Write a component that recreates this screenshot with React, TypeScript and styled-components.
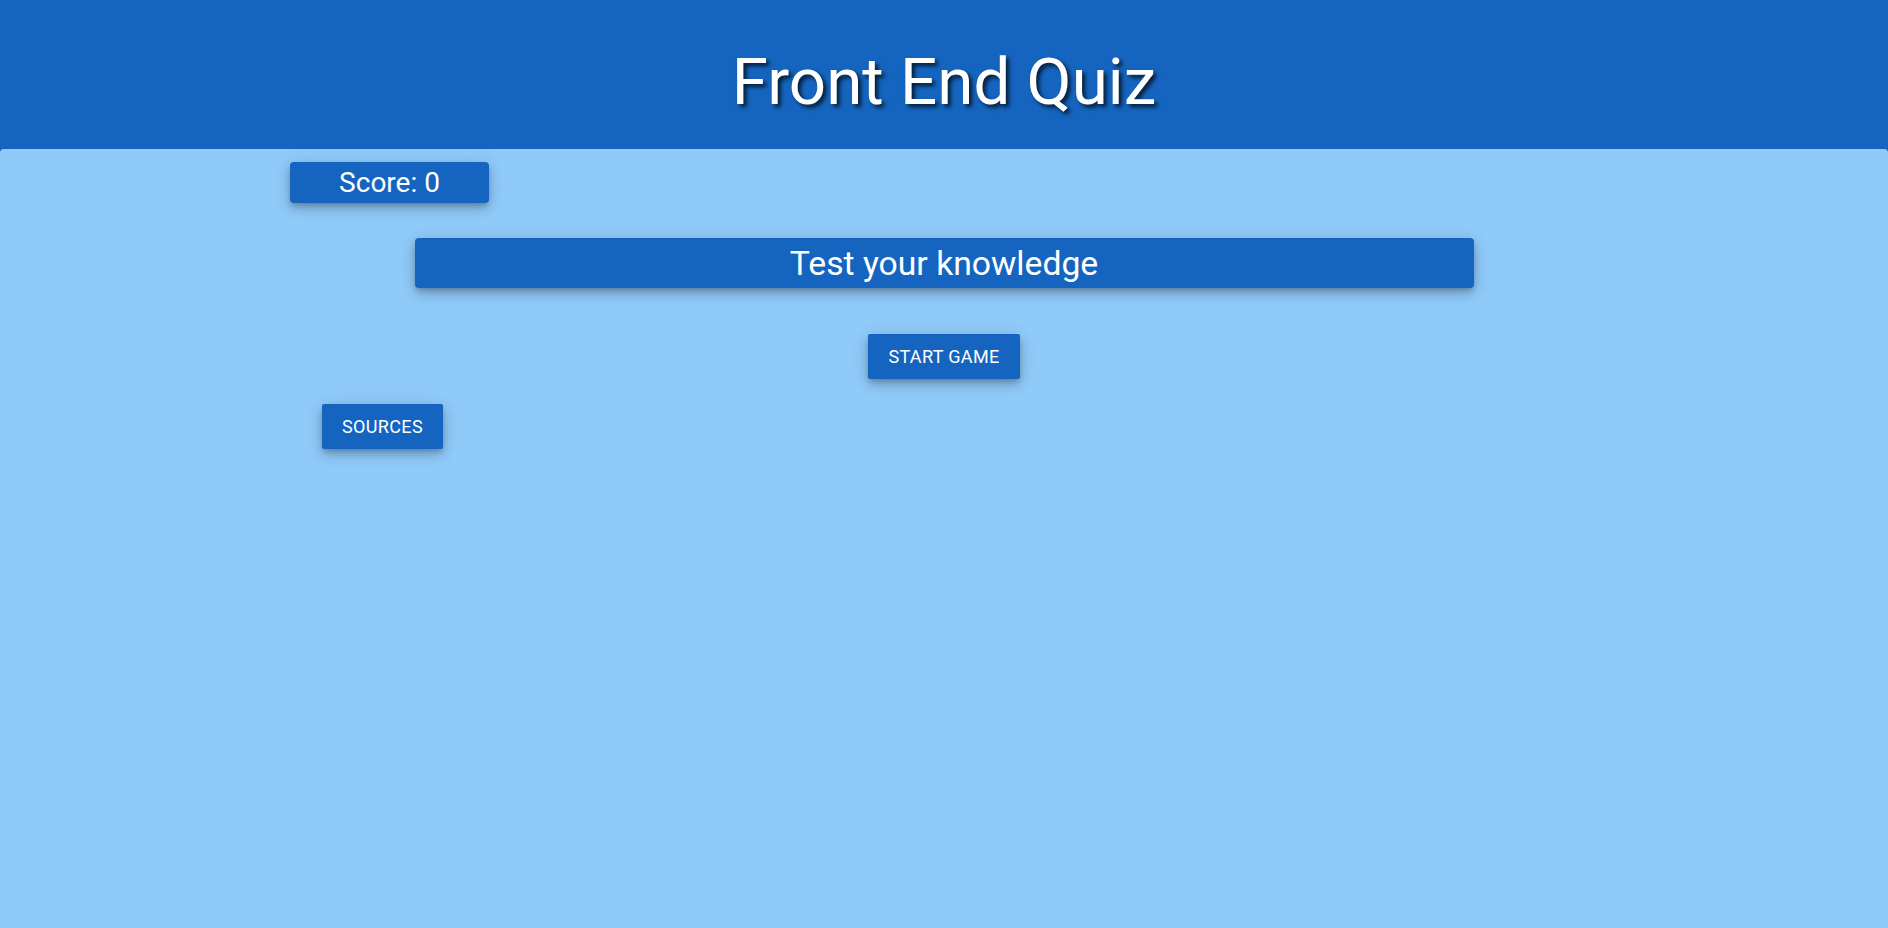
import React from "react";
import styled, { createGlobalStyle } from "styled-components";

const GlobalStyle = createGlobalStyle`
  html, body {
    margin: 0;
    padding: 0;
    background: #1565c0;
    font-family: Roboto, "Noto Sans", "Liberation Sans", sans-serif;
  }
  * { box-sizing: border-box; }
`;

const elevation = `0 3px 5px -1px rgba(0, 0, 0, 0.2), 0 6px 12px 0 rgba(0, 0, 0, 0.16),
    0 2px 18px 0 rgba(0, 0, 0, 0.12)`;

const Header = styled.header`
  height: 149px;
  background: #1565c0;
  padding-top: 44px;
  display: flex;
  justify-content: center;
`;

const Title = styled.h1`
  margin: 0;
  font-size: 65.5px;
  line-height: 75px;
  font-weight: 400;
  color: #ffffff;
  text-shadow: 3px 3px 4px rgba(0, 0, 0, 0.75);
`;

const Main = styled.main`
  min-height: calc(100vh - 149px);
  background: #90caf9;
  border-radius: 4px 4px 0 0;
  padding-top: 13px;
  display: flex;
  flex-direction: column;
`;

const Panel = styled.div`
  background: #1565c0;
  color: #ffffff;
  border-radius: 4px;
  box-shadow: ${elevation};
  display: flex;
  align-items: center;
  justify-content: center;
`;

const ScoreBox = styled(Panel)`
  width: 199px;
  height: 41px;
  margin-left: 290px;
  font-size: 28px;
`;

const QuestionBox = styled(Panel)`
  width: 1059px;
  height: 50px;
  margin: 35px auto 0;
  font-size: 33.7px;
`;

const Button = styled.button`
  background: #1565c0;
  color: #ffffff;
  border: none;
  border-radius: 2px;
  font-family: Roboto, "Noto Sans", "Liberation Sans", sans-serif;
  font-size: 18px;
  letter-spacing: 0.35px;
  font-weight: 400;
  text-transform: uppercase;
  padding: 12px 20px;
  height: 45px;
  cursor: pointer;
  box-shadow: ${elevation};
`;

const CenterRow = styled.div`
  display: flex;
  justify-content: center;
  margin-top: 46px;
`;

const SourcesRow = styled.div`
  display: flex;
  margin-top: 25px;
  padding-left: 322px;
`;

export default function App() {
  return (
    <>
      <GlobalStyle />
      <Header>
        <Title>Front End Quiz</Title>
      </Header>
      <Main>
        <ScoreBox>Score: 0</ScoreBox>
        <QuestionBox>Test your knowledge</QuestionBox>
        <CenterRow>
          <Button>Start Game</Button>
        </CenterRow>
        <SourcesRow>
          <Button>Sources</Button>
        </SourcesRow>
      </Main>
    </>
  );
}
